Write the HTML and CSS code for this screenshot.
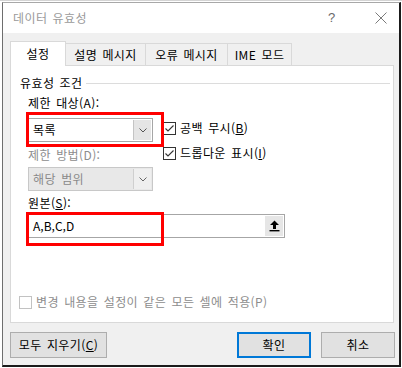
FILE: index.html
```html
<!DOCTYPE html>
<html lang="ko">
<head>
<meta charset="utf-8">
<title>데이터 유효성</title>
<link rel="stylesheet" href="styles.css">
</head>
<body>
<div class="dialog">
  <div class="titlebar">
    <span class="title">데이터 유효성</span>
    <span class="help">?</span>
    <span class="close">
      <svg width="12" height="12" viewBox="0 0 12 12"><path d="M0.5 0.5 L11.5 11.5 M11.5 0.5 L0.5 11.5" stroke="#7a7a7a" stroke-width="1" fill="none"/></svg>
    </span>
  </div>
  <div class="body">
    <div class="tabs">
      <div class="tab active t1">설정</div>
      <div class="tab t2">설명 메시지</div>
      <div class="tab t3">오류 메시지</div>
      <div class="tab t4">IME 모드</div>
    </div>
    <div class="panel">
      <div class="group-title"><span>유효성 조건</span><div class="rule"></div></div>
      <div class="criteria">
        <div class="label l1">제한 대상(A):</div>
        <div class="combo c1"><span class="val">목록</span><span class="drop"><svg width="8" height="5" viewBox="0 0 8 5"><path d="M0.5 0.5 L4 4 L7.5 0.5" stroke="#555" stroke-width="1" fill="none"/></svg></span></div>
        <div class="checks">
          <div class="check"><span class="box"><svg width="11" height="11" viewBox="0 0 11 11"><path d="M1.5 5.5 L4 8 L9.5 2.5" stroke="#333" stroke-width="1.1" fill="none"/></svg></span><span>공백 무시(<u>B</u>)</span></div>
          <div class="check"><span class="box"><svg width="11" height="11" viewBox="0 0 11 11"><path d="M1.5 5.5 L4 8 L9.5 2.5" stroke="#333" stroke-width="1.1" fill="none"/></svg></span><span>드롭다운 표시(<u>I</u>)</span></div>
        </div>
        <div class="label l2 disabled">제한 방법(D):</div>
        <div class="combo c2 dis"><span class="val">해당 범위</span><span class="drop"><svg width="8" height="5" viewBox="0 0 8 5"><path d="M0.5 0.5 L4 4 L7.5 0.5" stroke="#666" stroke-width="1" fill="none"/></svg></span></div>
        <div class="label l3">원본(<u>S</u>):</div>
        <div class="input"><span class="val">A,B,C,D</span><span class="pick"><svg width="11" height="12" viewBox="0 0 11 12"><path d="M5.5 0.5 L10 5 L7 5 L7 9 L4 9 L4 5 L1 5 Z" fill="#000"/><rect x="0.5" y="10" width="10" height="1.4" fill="#000"/></svg></span></div>
      </div>
      <div class="apply"><span class="box dis-box"></span><span>변경 내용을 설정이 같은 모든 셀에 적용(P)</span></div>
      <div class="mark m1"></div>
      <div class="mark m2"></div>
    </div>
    <div class="buttons">
      <div class="btn clear">모두 지우기(<u>C</u>)</div>
      <div class="spacer"></div>
      <div class="btn ok">확인</div>
      <div class="btn cancel">취소</div>
    </div>
  </div>
</div>
</body>
</html>
```
FILE: styles.css
```css
html, body {
  margin: 0;
  padding: 0;
}
body {
  width: 402px;
  height: 368px;
  overflow: hidden;
  background: #ffffff;
  font-family: "Noto Sans CJK KR", "Noto Sans", sans-serif;
  font-size: 12px;
  line-height: 16px;
  letter-spacing: 0.4px;
  word-spacing: 1.5px;
  color: #000;
  position: relative;
  box-shadow: inset 0 1px 0 #d4d4d4;
}
.dialog {
  margin: 2px 0 0 2px;
  width: 396px;
  border-top: 1px solid #a8a8a8;
  border-left: 1px solid #6e6e6e;
  border-right: 2px solid #1a1a1a;
  border-bottom: 2px solid #1a1a1a;
  display: flex;
  flex-direction: column;
}
.titlebar {
  height: 30px;
  background: #ffffff;
  display: flex;
  align-items: center;
  padding-left: 10px;
}
.title {
  color: #9a9a9a;
  flex: 1;
}
.help {
  color: #6a6a6a;
  font-family: "Liberation Sans", sans-serif;
  font-size: 13px;
  width: 10px;
}
.close {
  display: flex;
  margin-left: 37px;
  margin-right: 12px;
}
.body {
  background: #f0f0f0;
  padding: 8px 5px 7px 7px;
}
.tabs {
  display: flex;
  align-items: flex-end;
  margin-bottom: -1px;
  position: relative;
  z-index: 1;
}
.tab {
  box-sizing: border-box;
  height: 23px;
  border: 1px solid #d9d9d9;
  border-left: none;
  background: #f0f0f0;
  display: flex;
  align-items: center;
  justify-content: center;
  padding-top: 1px;
}
.tab.active {
  height: 25px;
  border-left: 1px solid #d9d9d9;
  border-bottom: none;
  background: #ffffff;
  padding-top: 0;
  padding-bottom: 1px;
}
.t1 { width: 56px; }
.t2 { width: 80px; }
.t3 { width: 82px; }
.t4 { width: 64px; }
.panel {
  position: relative;
  width: 384px;
  box-sizing: border-box;
  background: #ffffff;
  border: 1px solid #d9d9d9;
  padding: 9px 0 12px 9px;
}
.group-title {
  display: flex;
  align-items: center;
}
.rule {
  flex: 1;
  height: 1px;
  background: #dcdcdc;
  margin-left: 4px;
  margin-right: 3px;
}
.criteria {
  display: grid;
  grid-template-columns: 125px auto;
  column-gap: 10px;
  margin-left: 8px;
}
.label { grid-column: 1 / span 2; }
.l1 { grid-row: 1; margin-top: 4px; }
.c1 { grid-row: 2; grid-column: 1; margin-top: 7px; }
.checks {
  grid-row: 2 / span 3;
  grid-column: 2;
  margin-top: 9px;
  display: flex;
  flex-direction: column;
  gap: 9px;
  align-self: start;
}
.l2 { grid-row: 3; grid-column: 1; margin-top: 5px; }
.c2 { grid-row: 4; grid-column: 1; margin-top: 4px; }
.l3 { grid-row: 5; margin-top: 4px; }
.input { grid-row: 6; grid-column: 1 / span 2; margin-top: 3px; }
.disabled { color: #8d8d8d; }
.combo {
  box-sizing: border-box;
  height: 24px;
  border: 1px solid #a6a6a6;
  background: #ffffff;
  display: flex;
  align-items: center;
  padding: 1px;
}
.combo .val {
  flex: 1;
  padding-left: 3px;
}
.drop {
  width: 17px;
  align-self: stretch;
  background: #e5e5e5;
  border-left: 1px solid #c4c4c4;
  display: flex;
  align-items: center;
  justify-content: center;
}
.combo.dis {
  background: #e8e8e8;
  border-color: #c8c8c8;
  color: #8a8a8a;
}
.combo.dis .drop {
  background: #efefef;
  border-left: 1px solid #cfcfcf;
}
.check {
  display: flex;
  align-items: center;
  height: 16px;
  gap: 4px;
}
.box {
  box-sizing: border-box;
  width: 13px;
  height: 13px;
  border: 1px solid #333333;
  background: #ffffff;
  display: flex;
  align-items: center;
  justify-content: center;
}
.input {
  box-sizing: border-box;
  width: 257px;
  height: 24px;
  border: 1px solid #a6a6a6;
  background: #ffffff;
  display: flex;
  align-items: center;
  padding: 1px;
}
.input .val {
  flex: 1;
  padding-left: 3px;
  letter-spacing: 0;
}
.pick {
  width: 18px;
  align-self: stretch;
  background: #e6e6e6;
  display: flex;
  align-items: center;
  justify-content: center;
}
.apply {
  display: flex;
  align-items: center;
  gap: 4px;
  margin-top: 56px;
  margin-left: -1px;
  color: #8d8d8d;
}
.dis-box {
  border-color: #c2c2c2;
}
.mark {
  position: absolute;
  left: 15px;
  width: 138px;
  box-sizing: border-box;
  border: 3px solid #ff0000;
}
.m1 { top: 46px; height: 35px; }
.m2 { top: 146px; height: 34px; }
.buttons {
  display: flex;
  margin-top: 9px;
  width: 385px;
}
.spacer { flex: 1; }
.btn {
  box-sizing: border-box;
  height: 26px;
  background: #e1e1e1;
  border: 1px solid #adadad;
  display: flex;
  align-items: center;
  justify-content: center;
}
.clear { width: 97px; }
.ok {
  width: 74px;
  border: 2px solid #0078d7;
  margin-right: 10px;
}
.cancel { width: 74px; }
u { text-underline-offset: 1px; }
```
